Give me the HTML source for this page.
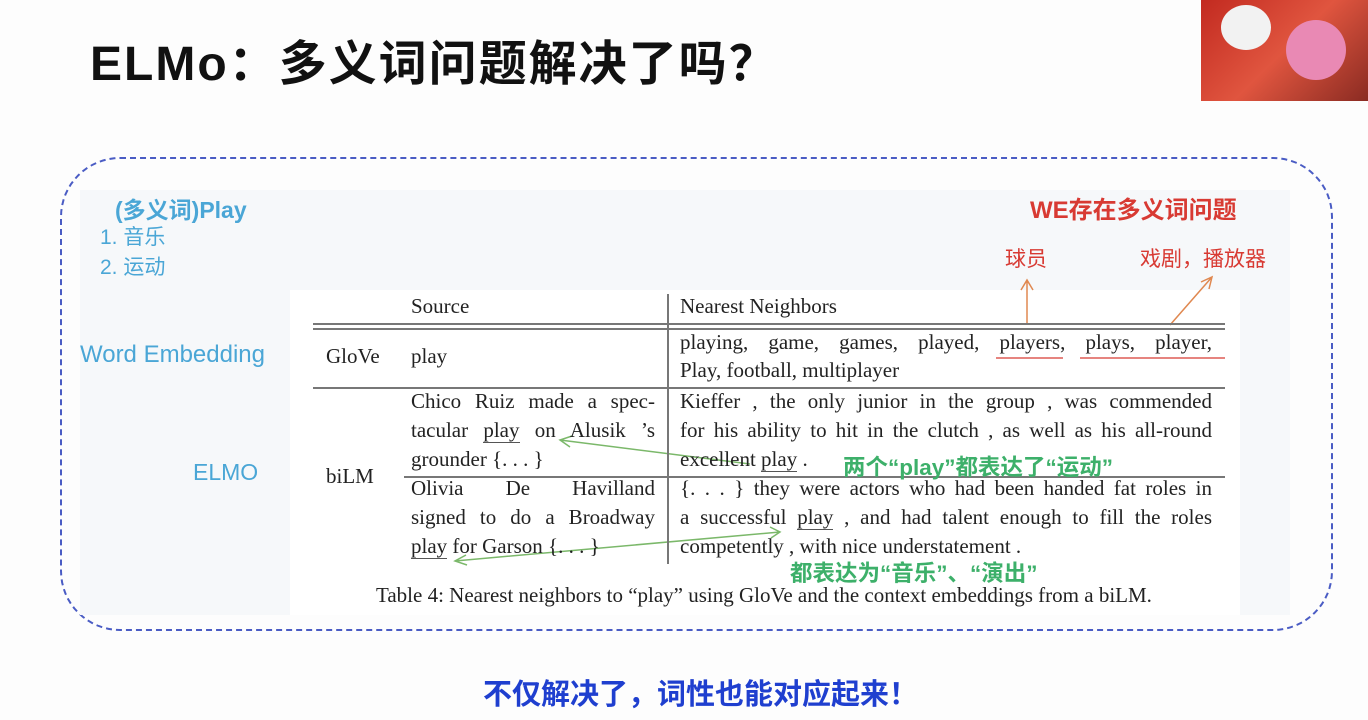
<!DOCTYPE html>
<html><head><meta charset="utf-8"><style>
body{margin:0;width:1368px;height:720px;background:#fdfdfd;position:relative;overflow:hidden;font-family:"Liberation Sans","Noto Sans CJK SC",sans-serif}
.a{position:absolute;white-space:nowrap}
.s{font-family:"Liberation Serif","Noto Serif CJK SC",serif;font-size:21px;color:#222}
.j{text-align:justify;text-align-last:justify;white-space:normal}
.w1{width:532px}.w2{width:244px}
.bl{color:#4aa6d6}
.rd{color:#d83a33}
.gr{color:#3db06a;font-weight:bold}
.hl{position:absolute;height:2px;background:#777}
u{text-decoration:none;border-bottom:1.5px solid #555}
</style></head><body>
<div class="a" style="left:90px;top:24px;font-size:48px;font-weight:bold;color:#111;letter-spacing:2px">ELMo：多义词问题解决了吗？</div>
<div class="a" style="left:1201px;top:0;width:167px;height:101px;background:linear-gradient(135deg,#c22a20,#e0553f 50%,#8a2b22);overflow:hidden">
<div style="position:absolute;left:85px;top:20px;width:60px;height:60px;background:#e989b4;border-radius:50%"></div>
<div style="position:absolute;left:20px;top:5px;width:50px;height:45px;background:#f2f2f2;border-radius:50%"></div>
</div>
<div class="a" style="left:60px;top:157px;width:1273px;height:474px;border:2px dashed #4a5cc4;border-radius:60px;box-sizing:border-box"></div>
<div class="a" style="left:80px;top:190px;width:1210px;height:425px;background:#f6f8fa"></div>
<div class="a" style="left:290px;top:290px;width:950px;height:325px;background:#fff"></div>
<div class="a bl" style="left:115px;top:191px;font-size:23px;font-weight:bold">(多义词)Play</div>
<div class="a bl" style="left:100px;top:221px;font-size:21px">1. 音乐</div>
<div class="a bl" style="left:100px;top:251px;font-size:21px">2. 运动</div>
<div class="a bl" style="left:80px;top:341px;font-size:24px">Word Embedding</div>
<div class="a bl" style="left:193px;top:459px;font-size:23px">ELMO</div>
<div class="a rd" style="left:1030px;top:190px;font-size:24px;font-weight:bold">WE存在多义词问题</div>
<div class="a rd" style="left:1005px;top:243px;font-size:21px">球员</div>
<div class="a rd" style="left:1140px;top:243px;font-size:21px">戏剧，播放器</div>
<svg class="a" style="left:0;top:0" width="1368" height="720">
<g stroke="#e08850" stroke-width="1.5" fill="none"><path d="M1027 325V280M1021 290l6-10 6 10"/><path d="M1170 325l42-48M1201 282l11-5-3 12"/></g>
<g stroke="#7bb86a" stroke-width="1.5" fill="none"><path d="M560 440L750 464M572 436l-12 4 10 7"/><path d="M780 532L455 561M770 527l10 5-9 6M466 555l-11 6 12 4"/></g>
<g stroke="#d83a33" stroke-width="1.2"><path d="M996 358H1063M1080 358H1225"/></g>
</svg>
<div class="hl" style="left:313px;top:323px;width:912px;height:1.5px"></div>
<div class="hl" style="left:313px;top:328px;width:912px;height:1.5px"></div>
<div class="hl" style="left:313px;top:387px;width:912px"></div>
<div class="hl" style="left:404px;top:476px;width:821px;height:1.5px"></div>
<div class="a" style="left:667px;top:294px;width:1.5px;height:270px;background:#777"></div>
<div class="a s" style="left:411px;top:294px">Source</div>
<div class="a s" style="left:680px;top:294px">Nearest Neighbors</div>
<div class="a s" style="left:326px;top:344px">GloVe</div>
<div class="a s" style="left:411px;top:344px">play</div>
<div class="a s j w1" style="left:680px;top:330px">playing, game, games, played, players, plays, player,</div>
<div class="a s" style="left:680px;top:358px">Play, football, multiplayer</div>
<div class="a s" style="left:326px;top:464px">biLM</div>
<div class="a s j w2" style="left:411px;top:389px">Chico Ruiz made a spec-</div>
<div class="a s j w2" style="left:411px;top:418px">tacular <u>play</u> on Alusik ’s</div>
<div class="a s" style="left:411px;top:447px">grounder {. . . }</div>
<div class="a s j w2" style="left:411px;top:476px">Olivia De Havilland</div>
<div class="a s j w2" style="left:411px;top:505px">signed to do a Broadway</div>
<div class="a s" style="left:411px;top:534px"><u>play</u> for Garson {. . . }</div>
<div class="a s j w1" style="left:680px;top:389px">Kieffer , the only junior in the group , was commended</div>
<div class="a s j w1" style="left:680px;top:418px">for his ability to hit in the clutch , as well as his all-round</div>
<div class="a s" style="left:680px;top:447px">excellent <u>play</u> .</div>
<div class="a gr" style="left:843px;top:450px;font-size:22.5px">两个“play”都表达了“运动”</div>
<div class="a s j w1" style="left:680px;top:476px">{. . . } they were actors who had been handed fat roles in</div>
<div class="a s j w1" style="left:680px;top:505px">a successful <u>play</u> , and had talent enough to fill the roles</div>
<div class="a s" style="left:680px;top:534px">competently , with nice understatement .</div>
<div class="a gr" style="left:790px;top:556px;font-size:22.5px">都表达为“音乐”、“演出”</div>
<div class="a s" style="left:376px;top:583px;font-size:21px">Table 4: Nearest neighbors to “play” using GloVe and the context embeddings from a biLM.</div>
<div class="a" style="left:483px;top:671px;font-size:29px;font-weight:bold;color:#1f3fcf">不仅解决了，词性也能对应起来！</div>
</body></html>
